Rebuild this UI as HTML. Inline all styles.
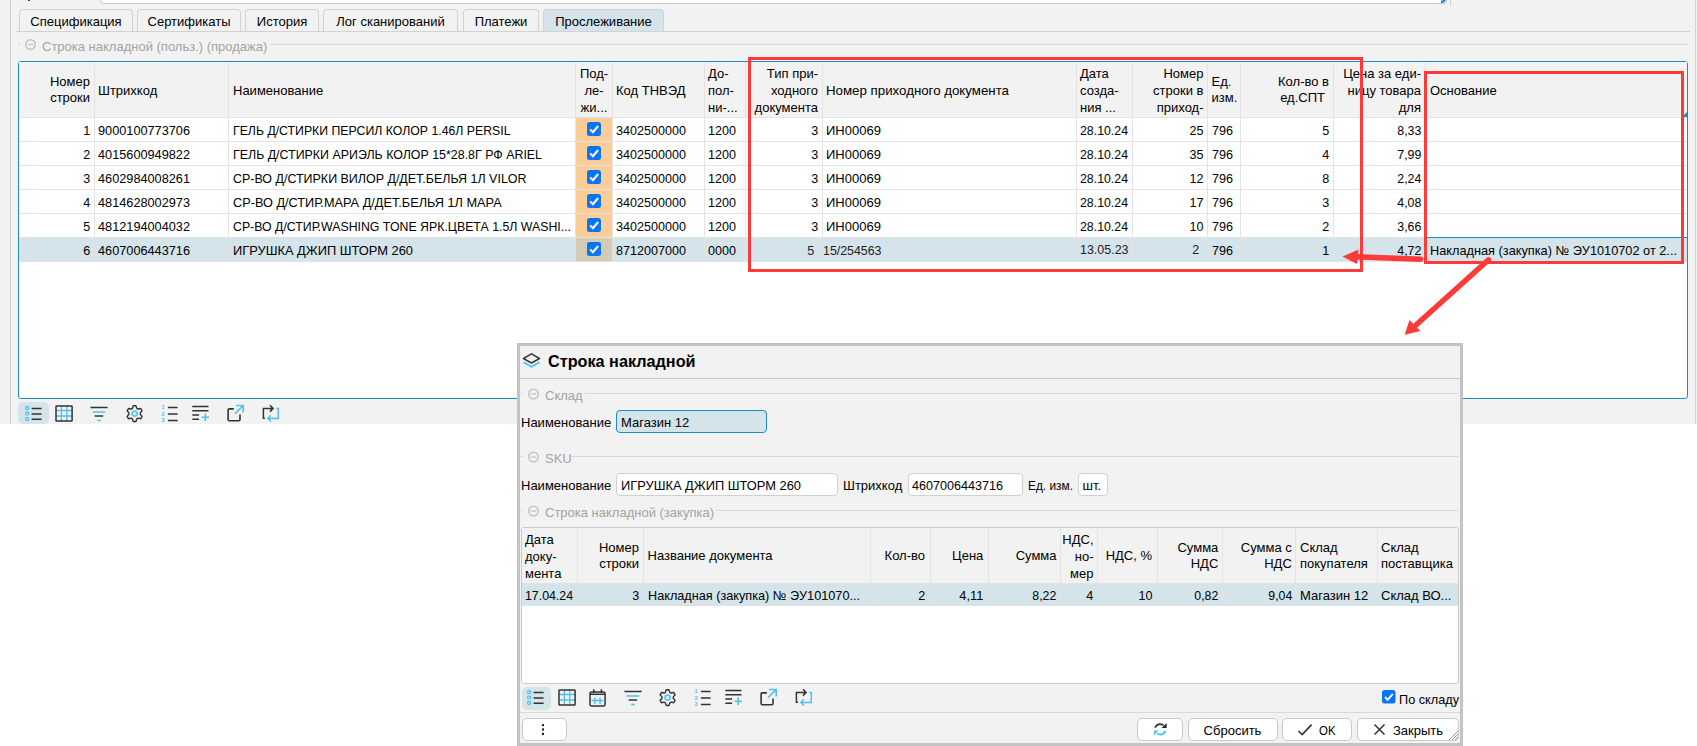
<!DOCTYPE html>
<html><head><meta charset="utf-8"><style>
html,body{margin:0;padding:0;}
body{width:1697px;height:746px;position:relative;overflow:hidden;background:#fff;font-family:"Liberation Sans",sans-serif;}
body>div,body>svg{position:absolute;}
.t{white-space:pre;}
</style></head><body>
<div style="left:0px;top:0px;width:1697px;height:424px;background:#f2f2f2"></div>
<div style="left:10px;top:0px;width:1px;height:424px;background:#cfcfcf"></div>
<div style="left:1695px;top:0px;width:1px;height:424px;background:#d2d2d2"></div>
<div style="left:100px;top:-20px;width:1347px;height:24px;background:#fff;border:1px solid #c8c8c8;border-top:none;border-radius:0 0 4px 4px;box-sizing:border-box"></div>
<svg style="left:1436px;top:-6px" width="12" height="10"><path d="M5 7.9 Q9.4 7.9 9.4 2" stroke="#1385c1" stroke-width="2.2" fill="none"/></svg>
<div style="left:1450px;top:0px;width:1px;height:6px;background:#cfcfcf"></div>
<div style="left:28px;top:0px;width:2px;height:1px;background:#5a3a20"></div>
<div style="left:16px;top:31px;width:1674px;height:1px;background:#d2d2d2"></div>
<div style="left:19px;top:9px;width:114px;height:22px;background:#f2f2f2;border:1px solid #d2d2d2;border-bottom:none;border-radius:4px 4px 0 0;box-sizing:border-box"></div>
<div class="t" style="top:14px;font-size:13px;line-height:16px;color:#000;left:76.0px;transform-origin:0 0;transform:translateX(-50%);">Спецификация</div>
<div style="left:137px;top:9px;width:104px;height:22px;background:#f2f2f2;border:1px solid #d2d2d2;border-bottom:none;border-radius:4px 4px 0 0;box-sizing:border-box"></div>
<div class="t" style="top:14px;font-size:13px;line-height:16px;color:#000;left:189.0px;transform-origin:0 0;transform:translateX(-50%);">Сертификаты</div>
<div style="left:245px;top:9px;width:74px;height:22px;background:#f2f2f2;border:1px solid #d2d2d2;border-bottom:none;border-radius:4px 4px 0 0;box-sizing:border-box"></div>
<div class="t" style="top:14px;font-size:13px;line-height:16px;color:#000;left:282.0px;transform-origin:0 0;transform:translateX(-50%);">История</div>
<div style="left:323px;top:9px;width:135px;height:22px;background:#f2f2f2;border:1px solid #d2d2d2;border-bottom:none;border-radius:4px 4px 0 0;box-sizing:border-box"></div>
<div class="t" style="top:14px;font-size:13px;line-height:16px;color:#000;left:390.5px;transform-origin:0 0;transform:translateX(-50%);">Лог сканирований</div>
<div style="left:463px;top:9px;width:76px;height:22px;background:#f2f2f2;border:1px solid #d2d2d2;border-bottom:none;border-radius:4px 4px 0 0;box-sizing:border-box"></div>
<div class="t" style="top:14px;font-size:13px;line-height:16px;color:#000;left:501.0px;transform-origin:0 0;transform:translateX(-50%);">Платежи</div>
<div style="left:543px;top:9px;width:121px;height:22px;background:#d4e4ea;border:1px solid #d2d2d2;border-bottom:none;border-radius:4px 4px 0 0;box-sizing:border-box"></div>
<div class="t" style="top:14px;font-size:13px;line-height:16px;color:#000;left:603.5px;transform-origin:0 0;transform:translateX(-50%);">Прослеживание</div>
<div style="left:18px;top:44px;width:2px;height:1px;background:#cfcfcf"></div>
<svg style="left:24px;top:38px" width="12" height="12"><circle cx="6.5" cy="6.5" r="4.7" fill="none" stroke="#c4c4c4" stroke-width="1.6"/><line x1="3.8" y1="6.5" x2="9.2" y2="6.5" stroke="#c4c4c4" stroke-width="1.3"/></svg>
<div class="t" style="top:39px;font-size:13px;line-height:16px;color:#a3a3a3;left:42px;transform-origin:0 0;">Строка накладной (польз.) (продажа)</div>
<div style="left:270px;top:44px;width:1418px;height:1px;background:#d8d8d8"></div>
<div style="left:18px;top:61px;width:1670px;height:338px;background:#fff;border:1px solid #1a8bc4;border-radius:3px;box-sizing:border-box"></div>
<div style="left:19px;top:62px;width:1668px;height:55px;background:#f2f2f2"></div>
<div style="left:19px;top:238px;width:1668px;height:23px;background:#d4e4ea"></div>
<div style="left:576px;top:118px;width:36px;height:23px;background:#fdcd99"></div>
<div style="left:576px;top:142px;width:36px;height:23px;background:#fdcd99"></div>
<div style="left:576px;top:166px;width:36px;height:23px;background:#fdcd99"></div>
<div style="left:576px;top:190px;width:36px;height:23px;background:#fdcd99"></div>
<div style="left:576px;top:214px;width:36px;height:23px;background:#fdcd99"></div>
<div style="left:576px;top:238px;width:36px;height:23px;background:#d3cbb3"></div>
<div style="left:19px;top:117px;width:1668px;height:1px;background:#e3e3e3"></div>
<div style="left:19px;top:141px;width:1668px;height:1px;background:#e3e3e3"></div>
<div style="left:19px;top:165px;width:1668px;height:1px;background:#e3e3e3"></div>
<div style="left:19px;top:189px;width:1668px;height:1px;background:#e3e3e3"></div>
<div style="left:19px;top:213px;width:1668px;height:1px;background:#e3e3e3"></div>
<div style="left:19px;top:237px;width:1668px;height:1px;background:#e3e3e3"></div>
<div style="left:19px;top:261px;width:1668px;height:1px;background:#e3e3e3"></div>
<div style="left:94px;top:62px;width:1px;height:200px;background:#e3e3e3"></div>
<div style="left:228px;top:62px;width:1px;height:200px;background:#e3e3e3"></div>
<div style="left:575px;top:62px;width:1px;height:200px;background:#e3e3e3"></div>
<div style="left:612px;top:62px;width:1px;height:200px;background:#e3e3e3"></div>
<div style="left:704px;top:62px;width:1px;height:200px;background:#e3e3e3"></div>
<div style="left:745px;top:62px;width:1px;height:200px;background:#e3e3e3"></div>
<div style="left:822px;top:62px;width:1px;height:200px;background:#e3e3e3"></div>
<div style="left:1076px;top:62px;width:1px;height:200px;background:#e3e3e3"></div>
<div style="left:1132px;top:62px;width:1px;height:200px;background:#e3e3e3"></div>
<div style="left:1207px;top:62px;width:1px;height:200px;background:#e3e3e3"></div>
<div style="left:1240px;top:62px;width:1px;height:200px;background:#e3e3e3"></div>
<div style="left:1333px;top:62px;width:1px;height:200px;background:#e3e3e3"></div>
<div style="left:1425px;top:62px;width:1px;height:200px;background:#e3e3e3"></div>
<div style="left:1425px;top:237px;width:262px;height:1px;background:#1a8bc4"></div>
<svg style="left:1682px;top:112px" width="6" height="6"><path d="M5 0V5H0Z" fill="#1a8bc4"/></svg>
<div class="t" style="top:74px;font-size:13px;line-height:16px;color:#000;right:1607px;transform-origin:100% 0;">Номер</div>
<div class="t" style="top:90px;font-size:13px;line-height:16px;color:#000;right:1607px;transform-origin:100% 0;">строки</div>
<div class="t" style="top:83px;font-size:13px;line-height:16px;color:#000;left:98px;transform-origin:0 0;">Штрихкод</div>
<div class="t" style="top:83px;font-size:13px;line-height:16px;color:#000;left:233px;transform-origin:0 0;">Наименование</div>
<div class="t" style="top:66px;font-size:13px;line-height:16px;color:#000;left:594px;transform-origin:0 0;transform:translateX(-50%);">Под-</div>
<div class="t" style="top:83px;font-size:13px;line-height:16px;color:#000;left:594px;transform-origin:0 0;transform:translateX(-50%);">ле-</div>
<div class="t" style="top:100px;font-size:13px;line-height:16px;color:#000;left:594px;transform-origin:0 0;transform:translateX(-50%);">жи...</div>
<div class="t" style="top:83px;font-size:13px;line-height:16px;color:#000;left:616px;transform-origin:0 0;">Код ТНВЭД</div>
<div class="t" style="top:66px;font-size:13px;line-height:16px;color:#000;left:708px;transform-origin:0 0;">До-</div>
<div class="t" style="top:83px;font-size:13px;line-height:16px;color:#000;left:708px;transform-origin:0 0;">пол-</div>
<div class="t" style="top:100px;font-size:13px;line-height:16px;color:#000;left:708px;transform-origin:0 0;">ни-...</div>
<div class="t" style="top:66px;font-size:13px;line-height:16px;color:#000;right:879px;transform-origin:100% 0;">Тип при-</div>
<div class="t" style="top:83px;font-size:13px;line-height:16px;color:#000;right:879px;transform-origin:100% 0;">ходного</div>
<div class="t" style="top:100px;font-size:13px;line-height:16px;color:#000;right:879px;transform-origin:100% 0;">документа</div>
<div class="t" style="top:83px;font-size:13px;line-height:16px;color:#000;left:826px;transform-origin:0 0;transform:scaleX(1.0215);">Номер приходного документа</div>
<div class="t" style="top:66px;font-size:13px;line-height:16px;color:#000;left:1080px;transform-origin:0 0;">Дата</div>
<div class="t" style="top:83px;font-size:13px;line-height:16px;color:#000;left:1080px;transform-origin:0 0;">созда-</div>
<div class="t" style="top:100px;font-size:13px;line-height:16px;color:#000;left:1080px;transform-origin:0 0;">ния ...</div>
<div class="t" style="top:66px;font-size:13px;line-height:16px;color:#000;right:493.5px;transform-origin:100% 0;">Номер</div>
<div class="t" style="top:83px;font-size:13px;line-height:16px;color:#000;right:493.5px;transform-origin:100% 0;">строки в</div>
<div class="t" style="top:100px;font-size:13px;line-height:16px;color:#000;right:493.5px;transform-origin:100% 0;">приход-</div>
<div class="t" style="top:74px;font-size:13px;line-height:16px;color:#000;left:1211.5px;transform-origin:0 0;">Ед.</div>
<div class="t" style="top:90px;font-size:13px;line-height:16px;color:#000;left:1211.5px;transform-origin:0 0;">изм.</div>
<div class="t" style="top:74px;font-size:13px;line-height:16px;color:#000;right:368px;transform-origin:100% 0;">Кол-во в</div>
<div class="t" style="top:90px;font-size:13px;line-height:16px;color:#000;right:372px;transform-origin:100% 0;">ед.СПТ</div>
<div class="t" style="top:66px;font-size:13px;line-height:16px;color:#000;right:276px;transform-origin:100% 0;">Цена за еди-</div>
<div class="t" style="top:83px;font-size:13px;line-height:16px;color:#000;right:276px;transform-origin:100% 0;">ницу товара</div>
<div class="t" style="top:100px;font-size:13px;line-height:16px;color:#000;right:276px;transform-origin:100% 0;">для</div>
<div class="t" style="top:83px;font-size:13px;line-height:16px;color:#000;left:1430px;transform-origin:0 0;">Основание</div>
<div class="t" style="top:123px;font-size:13px;line-height:16px;color:#000;right:1607px;transform-origin:100% 0;transform:scaleX(0.9676);">1</div>
<div class="t" style="top:123px;font-size:13px;line-height:16px;color:#000;left:98px;transform-origin:0 0;transform:scaleX(0.9787);">9000100773706</div>
<div class="t" style="top:123px;font-size:13px;line-height:16px;color:#000;left:233px;transform-origin:0 0;transform:scaleX(0.9449);">ГЕЛЬ Д/СТИРКИ ПЕРСИЛ КОЛОР 1.46Л PERSIL</div>
<div class="t" style="top:123px;font-size:13px;line-height:16px;color:#000;left:616px;transform-origin:0 0;transform:scaleX(0.9680);">3402500000</div>
<div class="t" style="top:123px;font-size:13px;line-height:16px;color:#000;left:708px;transform-origin:0 0;transform:scaleX(0.9681);">1200</div>
<div class="t" style="top:123px;font-size:13px;line-height:16px;color:#000;right:879px;transform-origin:100% 0;transform:scaleX(0.9676);">3</div>
<div class="t" style="top:123px;font-size:13px;line-height:16px;color:#000;left:826px;transform-origin:0 0;">ИН00069</div>
<div class="t" style="top:123px;font-size:13px;line-height:16px;color:#000;left:1080px;transform-origin:0 0;transform:scaleX(0.9484);">28.10.24</div>
<div class="t" style="top:123px;font-size:13px;line-height:16px;color:#000;right:493.5px;transform-origin:100% 0;transform:scaleX(0.9676);">25</div>
<div class="t" style="top:123px;font-size:13px;line-height:16px;color:#000;left:1211.5px;transform-origin:0 0;transform:scaleX(0.9676);">796</div>
<div class="t" style="top:123px;font-size:13px;line-height:16px;color:#000;right:368px;transform-origin:100% 0;transform:scaleX(0.9676);">5</div>
<div class="t" style="top:123px;font-size:13px;line-height:16px;color:#000;right:276px;transform-origin:100% 0;transform:scaleX(0.9481);">8,33</div>
<svg style="left:587px;top:122px" width="14" height="14"><rect x="0" y="0" width="14" height="14" rx="2.5" fill="#0a74f7"/><path d="M3.2 7.4 L5.9 10.2 L11.2 4" stroke="#fff" stroke-width="2" fill="none"/></svg>
<div class="t" style="top:147px;font-size:13px;line-height:16px;color:#000;right:1607px;transform-origin:100% 0;transform:scaleX(0.9676);">2</div>
<div class="t" style="top:147px;font-size:13px;line-height:16px;color:#000;left:98px;transform-origin:0 0;transform:scaleX(0.9787);">4015600949822</div>
<div class="t" style="top:147px;font-size:13px;line-height:16px;color:#000;left:233px;transform-origin:0 0;transform:scaleX(0.9540);">ГЕЛЬ Д/СТИРКИ АРИЭЛЬ КОЛОР 15*28.8Г РФ ARIEL</div>
<div class="t" style="top:147px;font-size:13px;line-height:16px;color:#000;left:616px;transform-origin:0 0;transform:scaleX(0.9680);">3402500000</div>
<div class="t" style="top:147px;font-size:13px;line-height:16px;color:#000;left:708px;transform-origin:0 0;transform:scaleX(0.9681);">1200</div>
<div class="t" style="top:147px;font-size:13px;line-height:16px;color:#000;right:879px;transform-origin:100% 0;transform:scaleX(0.9676);">3</div>
<div class="t" style="top:147px;font-size:13px;line-height:16px;color:#000;left:826px;transform-origin:0 0;">ИН00069</div>
<div class="t" style="top:147px;font-size:13px;line-height:16px;color:#000;left:1080px;transform-origin:0 0;transform:scaleX(0.9484);">28.10.24</div>
<div class="t" style="top:147px;font-size:13px;line-height:16px;color:#000;right:493.5px;transform-origin:100% 0;transform:scaleX(0.9676);">35</div>
<div class="t" style="top:147px;font-size:13px;line-height:16px;color:#000;left:1211.5px;transform-origin:0 0;transform:scaleX(0.9676);">796</div>
<div class="t" style="top:147px;font-size:13px;line-height:16px;color:#000;right:368px;transform-origin:100% 0;transform:scaleX(0.9676);">4</div>
<div class="t" style="top:147px;font-size:13px;line-height:16px;color:#000;right:276px;transform-origin:100% 0;transform:scaleX(0.9481);">7,99</div>
<svg style="left:587px;top:146px" width="14" height="14"><rect x="0" y="0" width="14" height="14" rx="2.5" fill="#0a74f7"/><path d="M3.2 7.4 L5.9 10.2 L11.2 4" stroke="#fff" stroke-width="2" fill="none"/></svg>
<div class="t" style="top:171px;font-size:13px;line-height:16px;color:#000;right:1607px;transform-origin:100% 0;transform:scaleX(0.9676);">3</div>
<div class="t" style="top:171px;font-size:13px;line-height:16px;color:#000;left:98px;transform-origin:0 0;transform:scaleX(0.9787);">4602984008261</div>
<div class="t" style="top:171px;font-size:13px;line-height:16px;color:#000;left:233px;transform-origin:0 0;transform:scaleX(0.9585);">СР-ВО Д/СТИРКИ ВИЛОР Д/ДЕТ.БЕЛЬЯ 1Л VILOR</div>
<div class="t" style="top:171px;font-size:13px;line-height:16px;color:#000;left:616px;transform-origin:0 0;transform:scaleX(0.9680);">3402500000</div>
<div class="t" style="top:171px;font-size:13px;line-height:16px;color:#000;left:708px;transform-origin:0 0;transform:scaleX(0.9681);">1200</div>
<div class="t" style="top:171px;font-size:13px;line-height:16px;color:#000;right:879px;transform-origin:100% 0;transform:scaleX(0.9676);">3</div>
<div class="t" style="top:171px;font-size:13px;line-height:16px;color:#000;left:826px;transform-origin:0 0;">ИН00069</div>
<div class="t" style="top:171px;font-size:13px;line-height:16px;color:#000;left:1080px;transform-origin:0 0;transform:scaleX(0.9484);">28.10.24</div>
<div class="t" style="top:171px;font-size:13px;line-height:16px;color:#000;right:493.5px;transform-origin:100% 0;transform:scaleX(0.9676);">12</div>
<div class="t" style="top:171px;font-size:13px;line-height:16px;color:#000;left:1211.5px;transform-origin:0 0;transform:scaleX(0.9676);">796</div>
<div class="t" style="top:171px;font-size:13px;line-height:16px;color:#000;right:368px;transform-origin:100% 0;transform:scaleX(0.9676);">8</div>
<div class="t" style="top:171px;font-size:13px;line-height:16px;color:#000;right:276px;transform-origin:100% 0;transform:scaleX(0.9481);">2,24</div>
<svg style="left:587px;top:170px" width="14" height="14"><rect x="0" y="0" width="14" height="14" rx="2.5" fill="#0a74f7"/><path d="M3.2 7.4 L5.9 10.2 L11.2 4" stroke="#fff" stroke-width="2" fill="none"/></svg>
<div class="t" style="top:195px;font-size:13px;line-height:16px;color:#000;right:1607px;transform-origin:100% 0;transform:scaleX(0.9676);">4</div>
<div class="t" style="top:195px;font-size:13px;line-height:16px;color:#000;left:98px;transform-origin:0 0;transform:scaleX(0.9787);">4814628002973</div>
<div class="t" style="top:195px;font-size:13px;line-height:16px;color:#000;left:233px;transform-origin:0 0;transform:scaleX(0.9790);">СР-ВО Д/СТИР.МАРА Д/ДЕТ.БЕЛЬЯ 1Л МАРА</div>
<div class="t" style="top:195px;font-size:13px;line-height:16px;color:#000;left:616px;transform-origin:0 0;transform:scaleX(0.9680);">3402500000</div>
<div class="t" style="top:195px;font-size:13px;line-height:16px;color:#000;left:708px;transform-origin:0 0;transform:scaleX(0.9681);">1200</div>
<div class="t" style="top:195px;font-size:13px;line-height:16px;color:#000;right:879px;transform-origin:100% 0;transform:scaleX(0.9676);">3</div>
<div class="t" style="top:195px;font-size:13px;line-height:16px;color:#000;left:826px;transform-origin:0 0;">ИН00069</div>
<div class="t" style="top:195px;font-size:13px;line-height:16px;color:#000;left:1080px;transform-origin:0 0;transform:scaleX(0.9484);">28.10.24</div>
<div class="t" style="top:195px;font-size:13px;line-height:16px;color:#000;right:493.5px;transform-origin:100% 0;transform:scaleX(0.9676);">17</div>
<div class="t" style="top:195px;font-size:13px;line-height:16px;color:#000;left:1211.5px;transform-origin:0 0;transform:scaleX(0.9676);">796</div>
<div class="t" style="top:195px;font-size:13px;line-height:16px;color:#000;right:368px;transform-origin:100% 0;transform:scaleX(0.9676);">3</div>
<div class="t" style="top:195px;font-size:13px;line-height:16px;color:#000;right:276px;transform-origin:100% 0;transform:scaleX(0.9481);">4,08</div>
<svg style="left:587px;top:194px" width="14" height="14"><rect x="0" y="0" width="14" height="14" rx="2.5" fill="#0a74f7"/><path d="M3.2 7.4 L5.9 10.2 L11.2 4" stroke="#fff" stroke-width="2" fill="none"/></svg>
<div class="t" style="top:219px;font-size:13px;line-height:16px;color:#000;right:1607px;transform-origin:100% 0;transform:scaleX(0.9676);">5</div>
<div class="t" style="top:219px;font-size:13px;line-height:16px;color:#000;left:98px;transform-origin:0 0;transform:scaleX(0.9787);">4812194004032</div>
<div class="t" style="top:219px;font-size:13px;line-height:16px;color:#000;left:233px;transform-origin:0 0;transform:scaleX(0.9481);">СР-ВО Д/СТИР.WASHING TONE ЯРК.ЦВЕТА 1.5Л WASHI...</div>
<div class="t" style="top:219px;font-size:13px;line-height:16px;color:#000;left:616px;transform-origin:0 0;transform:scaleX(0.9680);">3402500000</div>
<div class="t" style="top:219px;font-size:13px;line-height:16px;color:#000;left:708px;transform-origin:0 0;transform:scaleX(0.9681);">1200</div>
<div class="t" style="top:219px;font-size:13px;line-height:16px;color:#000;right:879px;transform-origin:100% 0;transform:scaleX(0.9676);">3</div>
<div class="t" style="top:219px;font-size:13px;line-height:16px;color:#000;left:826px;transform-origin:0 0;">ИН00069</div>
<div class="t" style="top:219px;font-size:13px;line-height:16px;color:#000;left:1080px;transform-origin:0 0;transform:scaleX(0.9484);">28.10.24</div>
<div class="t" style="top:219px;font-size:13px;line-height:16px;color:#000;right:493.5px;transform-origin:100% 0;transform:scaleX(0.9676);">10</div>
<div class="t" style="top:219px;font-size:13px;line-height:16px;color:#000;left:1211.5px;transform-origin:0 0;transform:scaleX(0.9676);">796</div>
<div class="t" style="top:219px;font-size:13px;line-height:16px;color:#000;right:368px;transform-origin:100% 0;transform:scaleX(0.9676);">2</div>
<div class="t" style="top:219px;font-size:13px;line-height:16px;color:#000;right:276px;transform-origin:100% 0;transform:scaleX(0.9481);">3,66</div>
<svg style="left:587px;top:218px" width="14" height="14"><rect x="0" y="0" width="14" height="14" rx="2.5" fill="#0a74f7"/><path d="M3.2 7.4 L5.9 10.2 L11.2 4" stroke="#fff" stroke-width="2" fill="none"/></svg>
<div class="t" style="top:243px;font-size:13px;line-height:16px;color:#000;right:1607px;transform-origin:100% 0;transform:scaleX(0.9676);">6</div>
<div class="t" style="top:243px;font-size:13px;line-height:16px;color:#000;left:98px;transform-origin:0 0;transform:scaleX(0.9787);">4607006443716</div>
<div class="t" style="top:243px;font-size:13px;line-height:16px;color:#000;left:233px;transform-origin:0 0;transform:scaleX(0.9893);">ИГРУШКА ДЖИП ШТОРМ 260</div>
<div class="t" style="top:243px;font-size:13px;line-height:16px;color:#000;left:616px;transform-origin:0 0;transform:scaleX(0.9680);">8712007000</div>
<div class="t" style="top:243px;font-size:13px;line-height:16px;color:#000;left:708px;transform-origin:0 0;transform:scaleX(0.9681);">0000</div>
<div class="t" style="top:243px;font-size:13px;line-height:16px;color:#222;right:882.5px;transform-origin:100% 0;transform:scaleX(0.9676);">5</div>
<div class="t" style="top:243px;font-size:13px;line-height:16px;color:#222;left:822.5px;transform-origin:0 0;transform:scaleX(0.9519);">15/254563</div>
<div class="t" style="top:242px;font-size:13px;line-height:16px;color:#222;left:1080px;transform-origin:0 0;transform:scaleX(0.9583);">13.05.23</div>
<div class="t" style="top:242px;font-size:13px;line-height:16px;color:#222;right:497.5px;transform-origin:100% 0;transform:scaleX(0.9676);">2</div>
<div class="t" style="top:243px;font-size:13px;line-height:16px;color:#000;left:1211.5px;transform-origin:0 0;transform:scaleX(0.9676);">796</div>
<div class="t" style="top:243px;font-size:13px;line-height:16px;color:#000;right:368px;transform-origin:100% 0;transform:scaleX(0.9676);">1</div>
<div class="t" style="top:243px;font-size:13px;line-height:16px;color:#000;right:276px;transform-origin:100% 0;transform:scaleX(0.9481);">4,72</div>
<div class="t" style="top:243px;font-size:13px;line-height:16px;color:#000;left:1430px;transform-origin:0 0;transform:scaleX(0.9805);">Накладная (закупка) № ЭУ1010702 от 2...</div>
<svg style="left:587px;top:242px" width="14" height="14"><rect x="0" y="0" width="14" height="14" rx="2.5" fill="#0a74f7"/><path d="M3.2 7.4 L5.9 10.2 L11.2 4" stroke="#fff" stroke-width="2" fill="none"/></svg>
<div style="left:18px;top:402px;width:31px;height:22px;background:#d4e4ea;border-radius:5px"></div>
<svg style="left:24px;top:404px" width="20" height="20"><g fill="none" stroke="#4cc0f0" stroke-width="1.2"><rect x="1.7" y="2.7" width="2.8" height="2.8" rx="0.8"/><rect x="1.7" y="8.2" width="2.8" height="2.8" rx="0.8"/><rect x="1.7" y="13.5" width="2.8" height="2.8" rx="0.8"/></g><path d="M7.6 4.6H17.6M7.6 9.9H17.6M7.6 15.2H17.6" stroke="#333" stroke-width="1.5"/></svg>
<svg style="left:55px;top:404px" width="20" height="20"><path d="M6.4 2V17M11.8 2V17M1.5 6.5H17M1.5 12H17" stroke="#4cc0f0" stroke-width="1.3"/><rect x="1.0" y="2.0" width="16.1" height="15.1" rx="0.6" fill="none" stroke="#333" stroke-width="1.5"/></svg>
<svg style="left:89px;top:404px" width="20" height="20"><path d="M1.4 3.4H18.6M5.7 12.1H14.1" stroke="#333" stroke-width="1.5"/><path d="M3.6 8H16.3M8.2 16.4H11.9" stroke="#4cc0f0" stroke-width="1.5"/></svg>
<svg style="left:125px;top:404px" width="20" height="20"><g transform="translate(9.6,9.6)"><path d="M-2.22 -5.25 L-1.35 -7.88 L1.35 -7.88 L2.22 -5.25 L3.44 -4.55 L6.15 -5.11 L7.51 -2.77 L5.66 -0.70 L5.66 0.70 L7.51 2.77 L6.15 5.11 L3.44 4.55 L2.22 5.25 L1.35 7.88 L-1.35 7.88 L-2.22 5.25 L-3.44 4.55 L-6.15 5.11 L-7.51 2.77 L-5.66 0.70 L-5.66 -0.70 L-7.51 -2.77 L-6.15 -5.11 L-3.44 -4.55Z" fill="none" stroke="#333" stroke-width="1.4" stroke-linejoin="round"/><circle r="2.5" fill="none" stroke="#62c8f2" stroke-width="1.9"/></g></svg>
<svg style="left:161px;top:404px" width="20" height="20"><g font-size="5.5" font-family="Liberation Sans" font-weight="bold" fill="#4cc0f0"><text x="0.6" y="5.3">1</text><text x="0.6" y="11.8">2</text><text x="0.6" y="18.3">3</text></g><path d="M6.9 3.4H16.6M6.9 9.9H16.6M6.9 16.4H16.6" stroke="#333" stroke-width="1.5"/></svg>
<svg style="left:191px;top:404px" width="20" height="20"><path d="M1.3 2.5H17.5M1.3 6.7H17.5M1.3 11.1H8.1M1.3 15.2H8.1" stroke="#333" stroke-width="1.5"/><path d="M10.6 13.2H18M14.3 9.6V17" stroke="#4cc0f0" stroke-width="1.6"/></svg>
<svg style="left:226px;top:404px" width="20" height="20"><path d="M7.8 4.9H3.3Q2.1 4.9 2.1 6.1V15.6Q2.1 16.8 3.3 16.8H12.8Q14 16.8 14 15.6V10.6" stroke="#333" stroke-width="1.6" fill="none"/><path d="M8.9 9.8L17 1.7M10.2 1.5H17.2V8.4" stroke="#4cc0f0" stroke-width="1.6" fill="none"/></svg>
<svg style="left:261px;top:404px" width="20" height="20"><path d="M3.9 14.3H2.4V4.4H12.1M8.9 1.3L12.1 4.4L8.9 7.6" stroke="#333" stroke-width="1.5" fill="none"/><path d="M15.4 4.4H17.3V14.5H6.9M9.9 11.2L6.9 14.5L9.9 17.6" stroke="#4cc0f0" stroke-width="1.5" fill="none"/></svg>
<div style="left:517px;top:343px;width:946px;height:403px;background:#f2f2f2;border:3px solid #c3c3c3;box-sizing:border-box"></div>
<svg style="left:521px;top:351px" width="20" height="18"><path d="M2.4 7.5L10.5 2.8L18.5 7.5L10.5 12Z" fill="none" stroke="#3a3a3a" stroke-width="1.5" stroke-linejoin="round"/><path d="M2.4 11.3L10.5 15.8L18.5 11.3" fill="none" stroke="#4cc0f0" stroke-width="1.6"/></svg>
<div class="t" style="top:352px;font-size:16px;line-height:20px;color:#000;font-weight:700;left:547.5px;transform-origin:0 0;transform:scaleX(1.0134);">Строка накладной</div>
<div style="left:520px;top:378px;width:940px;height:1px;background:#c6c6c6"></div>
<div style="left:521px;top:393px;width:2px;height:1px;background:#cfcfcf"></div>
<svg style="left:527px;top:388px" width="12" height="12"><circle cx="6.5" cy="6.0" r="4.7" fill="none" stroke="#c4c4c4" stroke-width="1.6"/><line x1="3.8" y1="6.0" x2="9.2" y2="6.0" stroke="#c4c4c4" stroke-width="1.3"/></svg>
<div class="t" style="top:388px;font-size:13px;line-height:16px;color:#a3a3a3;left:545px;transform-origin:0 0;">Склад</div>
<div style="left:585px;top:393px;width:873px;height:1px;background:#d8d8d8"></div>
<div class="t" style="top:415px;font-size:13px;line-height:16px;color:#000;left:521px;transform-origin:0 0;">Наименование</div>
<div style="left:616px;top:410px;width:151px;height:23px;background:#d4e4ea;border:1px solid #1a8bc4;border-radius:4px;box-sizing:border-box"></div>
<div class="t" style="top:415px;font-size:13px;line-height:16px;color:#000;left:621px;transform-origin:0 0;">Магазин 12</div>
<div style="left:521px;top:456px;width:2px;height:1px;background:#cfcfcf"></div>
<svg style="left:527px;top:451px" width="12" height="12"><circle cx="6.5" cy="6.0" r="4.7" fill="none" stroke="#c4c4c4" stroke-width="1.6"/><line x1="3.8" y1="6.0" x2="9.2" y2="6.0" stroke="#c4c4c4" stroke-width="1.3"/></svg>
<div class="t" style="top:451px;font-size:13px;line-height:16px;color:#a3a3a3;left:545px;transform-origin:0 0;">SKU</div>
<div style="left:571px;top:456px;width:887px;height:1px;background:#d8d8d8"></div>
<div class="t" style="top:478px;font-size:13px;line-height:16px;color:#000;left:521px;transform-origin:0 0;">Наименование</div>
<div style="left:616px;top:473px;width:222px;height:23px;background:#fff;border:1px solid #d0d0d0;border-radius:4px;box-sizing:border-box"></div>
<div class="t" style="top:478px;font-size:13px;line-height:16px;color:#000;left:621px;transform-origin:0 0;transform:scaleX(0.9893);">ИГРУШКА ДЖИП ШТОРМ 260</div>
<div class="t" style="top:478px;font-size:13px;line-height:16px;color:#000;left:843px;transform-origin:0 0;">Штрихкод</div>
<div style="left:908px;top:473px;width:115px;height:23px;background:#fff;border:1px solid #d0d0d0;border-radius:4px;box-sizing:border-box"></div>
<div class="t" style="top:478px;font-size:13px;line-height:16px;color:#000;left:912px;transform-origin:0 0;transform:scaleX(0.9681);">4607006443716</div>
<div class="t" style="top:478px;font-size:13px;line-height:16px;color:#000;left:1028px;transform-origin:0 0;transform:scaleX(0.9134);">Ед. изм.</div>
<div style="left:1078px;top:473px;width:30px;height:23px;background:#fff;border:1px solid #d0d0d0;border-radius:4px;box-sizing:border-box"></div>
<div class="t" style="top:478px;font-size:13px;line-height:16px;color:#000;left:1082.5px;transform-origin:0 0;">шт.</div>
<div style="left:521px;top:510px;width:2px;height:1px;background:#cfcfcf"></div>
<svg style="left:527px;top:505px" width="12" height="12"><circle cx="6.5" cy="6.0" r="4.7" fill="none" stroke="#c4c4c4" stroke-width="1.6"/><line x1="3.8" y1="6.0" x2="9.2" y2="6.0" stroke="#c4c4c4" stroke-width="1.3"/></svg>
<div class="t" style="top:505px;font-size:13px;line-height:16px;color:#a3a3a3;left:545px;transform-origin:0 0;">Строка накладной (закупка)</div>
<div style="left:716px;top:510px;width:742px;height:1px;background:#d8d8d8"></div>
<div style="left:521px;top:527px;width:938px;height:157px;background:#fff;border:1px solid #cbcbcb;border-radius:3px;box-sizing:border-box"></div>
<div style="left:522px;top:528px;width:936px;height:55px;background:#f2f2f2"></div>
<div style="left:522px;top:584px;width:936px;height:21px;background:#d4e4ea"></div>
<div style="left:522px;top:583px;width:936px;height:1px;background:#e3e3e3"></div>
<div style="left:522px;top:605px;width:936px;height:1px;background:#e3e3e3"></div>
<div style="left:577px;top:528px;width:1px;height:77px;background:#e3e3e3"></div>
<div style="left:643px;top:528px;width:1px;height:77px;background:#e3e3e3"></div>
<div style="left:870px;top:528px;width:1px;height:77px;background:#e3e3e3"></div>
<div style="left:930px;top:528px;width:1px;height:77px;background:#e3e3e3"></div>
<div style="left:988px;top:528px;width:1px;height:77px;background:#e3e3e3"></div>
<div style="left:1060px;top:528px;width:1px;height:77px;background:#e3e3e3"></div>
<div style="left:1097px;top:528px;width:1px;height:77px;background:#e3e3e3"></div>
<div style="left:1157px;top:528px;width:1px;height:77px;background:#e3e3e3"></div>
<div style="left:1222px;top:528px;width:1px;height:77px;background:#e3e3e3"></div>
<div style="left:1295px;top:528px;width:1px;height:77px;background:#e3e3e3"></div>
<div style="left:1377px;top:528px;width:1px;height:77px;background:#e3e3e3"></div>
<div class="t" style="top:532px;font-size:13px;line-height:16px;color:#000;left:525px;transform-origin:0 0;">Дата</div>
<div class="t" style="top:549px;font-size:13px;line-height:16px;color:#000;left:525px;transform-origin:0 0;">доку-</div>
<div class="t" style="top:566px;font-size:13px;line-height:16px;color:#000;left:525px;transform-origin:0 0;">мента</div>
<div class="t" style="top:540px;font-size:13px;line-height:16px;color:#000;right:1058px;transform-origin:100% 0;">Номер</div>
<div class="t" style="top:556px;font-size:13px;line-height:16px;color:#000;right:1058px;transform-origin:100% 0;">строки</div>
<div class="t" style="top:548px;font-size:13px;line-height:16px;color:#000;left:647.5px;transform-origin:0 0;">Название документа</div>
<div class="t" style="top:548px;font-size:13px;line-height:16px;color:#000;right:772px;transform-origin:100% 0;">Кол-во</div>
<div class="t" style="top:548px;font-size:13px;line-height:16px;color:#000;right:713.7px;transform-origin:100% 0;">Цена</div>
<div class="t" style="top:548px;font-size:13px;line-height:16px;color:#000;right:640.5px;transform-origin:100% 0;">Сумма</div>
<div class="t" style="top:532px;font-size:13px;line-height:16px;color:#000;right:603.5px;transform-origin:100% 0;">НДС,</div>
<div class="t" style="top:549px;font-size:13px;line-height:16px;color:#000;right:603.5px;transform-origin:100% 0;">но-</div>
<div class="t" style="top:566px;font-size:13px;line-height:16px;color:#000;right:603.5px;transform-origin:100% 0;">мер</div>
<div class="t" style="top:548px;font-size:13px;line-height:16px;color:#000;right:545px;transform-origin:100% 0;">НДС, %</div>
<div class="t" style="top:540px;font-size:13px;line-height:16px;color:#000;right:478.70000000000005px;transform-origin:100% 0;">Сумма</div>
<div class="t" style="top:556px;font-size:13px;line-height:16px;color:#000;right:478.70000000000005px;transform-origin:100% 0;">НДС</div>
<div class="t" style="top:540px;font-size:13px;line-height:16px;color:#000;right:405.20000000000005px;transform-origin:100% 0;">Сумма с</div>
<div class="t" style="top:556px;font-size:13px;line-height:16px;color:#000;right:405.20000000000005px;transform-origin:100% 0;">НДС</div>
<div class="t" style="top:540px;font-size:13px;line-height:16px;color:#000;left:1300px;transform-origin:0 0;">Склад</div>
<div class="t" style="top:556px;font-size:13px;line-height:16px;color:#000;left:1300px;transform-origin:0 0;">покупателя</div>
<div class="t" style="top:540px;font-size:13px;line-height:16px;color:#000;left:1381px;transform-origin:0 0;">Склад</div>
<div class="t" style="top:556px;font-size:13px;line-height:16px;color:#000;left:1381px;transform-origin:0 0;">поставщика</div>
<div class="t" style="top:588px;font-size:13px;line-height:16px;color:#000;left:525px;transform-origin:0 0;transform:scaleX(0.9484);">17.04.24</div>
<div class="t" style="top:588px;font-size:13px;line-height:16px;color:#000;right:1058px;transform-origin:100% 0;transform:scaleX(0.9676);">3</div>
<div class="t" style="top:588px;font-size:13px;line-height:16px;color:#000;left:647.5px;transform-origin:0 0;transform:scaleX(0.9755);">Накладная (закупка) № ЭУ101070...</div>
<div class="t" style="top:588px;font-size:13px;line-height:16px;color:#000;right:772px;transform-origin:100% 0;transform:scaleX(0.9676);">2</div>
<div class="t" style="top:588px;font-size:13px;line-height:16px;color:#000;right:713.7px;transform-origin:100% 0;transform:scaleX(0.9859);">4,11</div>
<div class="t" style="top:588px;font-size:13px;line-height:16px;color:#000;right:640.5px;transform-origin:100% 0;transform:scaleX(0.9481);">8,22</div>
<div class="t" style="top:588px;font-size:13px;line-height:16px;color:#000;right:603.5px;transform-origin:100% 0;transform:scaleX(0.9676);">4</div>
<div class="t" style="top:588px;font-size:13px;line-height:16px;color:#000;right:545px;transform-origin:100% 0;transform:scaleX(0.9676);">10</div>
<div class="t" style="top:588px;font-size:13px;line-height:16px;color:#000;right:478.70000000000005px;transform-origin:100% 0;transform:scaleX(0.9481);">0,82</div>
<div class="t" style="top:588px;font-size:13px;line-height:16px;color:#000;right:405.20000000000005px;transform-origin:100% 0;transform:scaleX(0.9481);">9,04</div>
<div class="t" style="top:588px;font-size:13px;line-height:16px;color:#000;left:1300px;transform-origin:0 0;">Магазин 12</div>
<div class="t" style="top:588px;font-size:13px;line-height:16px;color:#000;left:1381px;transform-origin:0 0;">Склад ВО...</div>
<div style="left:522px;top:687px;width:29px;height:23px;background:#d4e4ea;border-radius:5px"></div>
<svg style="left:526px;top:688px" width="20" height="20"><g fill="none" stroke="#4cc0f0" stroke-width="1.2"><rect x="1.7" y="2.7" width="2.8" height="2.8" rx="0.8"/><rect x="1.7" y="8.2" width="2.8" height="2.8" rx="0.8"/><rect x="1.7" y="13.5" width="2.8" height="2.8" rx="0.8"/></g><path d="M7.6 4.6H17.6M7.6 9.9H17.6M7.6 15.2H17.6" stroke="#333" stroke-width="1.5"/></svg>
<svg style="left:558px;top:688px" width="20" height="20"><path d="M6.4 2V17M11.8 2V17M1.5 6.5H17M1.5 12H17" stroke="#4cc0f0" stroke-width="1.3"/><rect x="1.0" y="2.0" width="16.1" height="15.1" rx="0.6" fill="none" stroke="#333" stroke-width="1.5"/></svg>
<svg style="left:588px;top:688px" width="20" height="20"><rect x="2" y="4.1" width="15.1" height="13.9" rx="1.6" fill="none" stroke="#333" stroke-width="1.5"/><path d="M2 6.2H17.1M5.8 1.2V5M13.4 1.2V5" stroke="#333" stroke-width="1.5"/><path d="M3.5 12.5H15.3M6.9 9.4V16.3M12.1 9.4V16.3" stroke="#4cc0f0" stroke-width="1.4"/></svg>
<svg style="left:623px;top:688px" width="20" height="20"><path d="M1.4 3.4H18.6M5.7 12.1H14.1" stroke="#333" stroke-width="1.5"/><path d="M3.6 8H16.3M8.2 16.4H11.9" stroke="#4cc0f0" stroke-width="1.5"/></svg>
<svg style="left:658px;top:688px" width="20" height="20"><g transform="translate(9.6,9.6)"><path d="M-2.22 -5.25 L-1.35 -7.88 L1.35 -7.88 L2.22 -5.25 L3.44 -4.55 L6.15 -5.11 L7.51 -2.77 L5.66 -0.70 L5.66 0.70 L7.51 2.77 L6.15 5.11 L3.44 4.55 L2.22 5.25 L1.35 7.88 L-1.35 7.88 L-2.22 5.25 L-3.44 4.55 L-6.15 5.11 L-7.51 2.77 L-5.66 0.70 L-5.66 -0.70 L-7.51 -2.77 L-6.15 -5.11 L-3.44 -4.55Z" fill="none" stroke="#333" stroke-width="1.4" stroke-linejoin="round"/><circle r="2.5" fill="none" stroke="#62c8f2" stroke-width="1.9"/></g></svg>
<svg style="left:694px;top:688px" width="20" height="20"><g font-size="5.5" font-family="Liberation Sans" font-weight="bold" fill="#4cc0f0"><text x="0.6" y="5.3">1</text><text x="0.6" y="11.8">2</text><text x="0.6" y="18.3">3</text></g><path d="M6.9 3.4H16.6M6.9 9.9H16.6M6.9 16.4H16.6" stroke="#333" stroke-width="1.5"/></svg>
<svg style="left:724px;top:688px" width="20" height="20"><path d="M1.3 2.5H17.5M1.3 6.7H17.5M1.3 11.1H8.1M1.3 15.2H8.1" stroke="#333" stroke-width="1.5"/><path d="M10.6 13.2H18M14.3 9.6V17" stroke="#4cc0f0" stroke-width="1.6"/></svg>
<svg style="left:759px;top:688px" width="20" height="20"><path d="M7.8 4.9H3.3Q2.1 4.9 2.1 6.1V15.6Q2.1 16.8 3.3 16.8H12.8Q14 16.8 14 15.6V10.6" stroke="#333" stroke-width="1.6" fill="none"/><path d="M8.9 9.8L17 1.7M10.2 1.5H17.2V8.4" stroke="#4cc0f0" stroke-width="1.6" fill="none"/></svg>
<svg style="left:794px;top:688px" width="20" height="20"><path d="M3.9 14.3H2.4V4.4H12.1M8.9 1.3L12.1 4.4L8.9 7.6" stroke="#333" stroke-width="1.5" fill="none"/><path d="M15.4 4.4H17.3V14.5H6.9M9.9 11.2L6.9 14.5L9.9 17.6" stroke="#4cc0f0" stroke-width="1.5" fill="none"/></svg>
<svg style="left:1382px;top:690px" width="14" height="14"><rect x="0" y="0" width="13.5" height="13.5" rx="2.5" fill="#0a74f7"/><path d="M3 7 L5.6 9.8 L10.8 3.8" stroke="#fff" stroke-width="1.9" fill="none"/></svg>
<div class="t" style="top:692px;font-size:13px;line-height:16px;color:#000;left:1398.5px;transform-origin:0 0;transform:scaleX(0.9769);">По складу</div>
<div style="left:520px;top:712px;width:940px;height:1px;background:#d8d8d8"></div>
<div style="left:522px;top:718px;width:45px;height:23px;background:#fff;border:1px solid #c9c9c9;border-radius:5px;box-sizing:border-box"></div>
<svg style="left:540px;top:722px" width="6" height="16"><circle cx="3" cy="3.2" r="1.15" fill="#111"/><circle cx="3" cy="7.5" r="1.15" fill="#111"/><circle cx="3" cy="12" r="1.15" fill="#111"/></svg>
<div style="left:1137px;top:718px;width:46px;height:23px;background:#fff;border:1px solid #c9c9c9;border-radius:5px;box-sizing:border-box"></div>
<svg style="left:1150px;top:719px" width="20" height="20"><path d="M5 8.6Q7.6 3.5 13.5 6.1" stroke="#333" stroke-width="1.7" fill="none"/><path d="M16.6 3.9V9H11.7Z" fill="#222"/><path d="M15.6 12Q12.6 17.3 6.8 14.6" stroke="#4cc0f0" stroke-width="1.7" fill="none"/><path d="M3.9 11.6H8.4L3.9 16.6Z" fill="#4cc0f0"/></svg>
<div style="left:1188px;top:718px;width:90px;height:23px;background:#fff;border:1px solid #c9c9c9;border-radius:5px;box-sizing:border-box"></div>
<div class="t" style="top:723px;font-size:13px;line-height:16px;color:#000;left:1232.5px;transform-origin:0 0;transform:translateX(-50%);">Сбросить</div>
<div style="left:1282px;top:718px;width:70px;height:23px;background:#fff;border:1px solid #c9c9c9;border-radius:5px;box-sizing:border-box"></div>
<svg style="left:1296px;top:722px" width="18" height="16"><path d="M2.4 9L6.2 12.6L15.6 2.6" stroke="#333" stroke-width="1.6" fill="none"/></svg>
<div class="t" style="top:723px;font-size:13px;line-height:16px;color:#000;left:1319px;transform-origin:0 0;transform:scaleX(0.8778);">OK</div>
<div style="left:1357px;top:718px;width:102px;height:23px;background:#fff;border:1px solid #c9c9c9;border-radius:5px;box-sizing:border-box"></div>
<svg style="left:1372px;top:722px" width="16" height="16"><path d="M2.5 2.5L12.5 12.5M12.5 2.5L2.5 12.5" stroke="#333" stroke-width="1.5" fill="none"/></svg>
<div class="t" style="top:723px;font-size:13px;line-height:16px;color:#000;left:1393px;transform-origin:0 0;">Закрыть</div>
<svg style="left:1447px;top:729px" width="12" height="12"><path d="M11 2L2 11M11 5L5 11M11 8L8 11" stroke="#9a9a9a" stroke-width="1"/></svg>
<div style="left:748px;top:57px;width:615px;height:215px;border:3px solid #fc3a3a;box-sizing:border-box"></div>
<div style="left:1424px;top:71px;width:260px;height:193px;border:3px solid #fc3a3a;box-sizing:border-box"></div>
<svg style="left:1330px;top:240px" width="180" height="110"><path d="M90.5 19.19999999999999 L26 16.80000000000001" stroke="#fc3a3a" stroke-width="5.5" stroke-linecap="round"/><path d="M12.5 16.600000000000023 L28.5 9.5 L27 24Z" fill="#fc3a3a"/><path d="M158.5 19.80000000000001 L86 85" stroke="#fc3a3a" stroke-width="5.5" stroke-linecap="round"/><path d="M74.70000000000005 94.80000000000001 L79.5 80 L90.5 91Z" fill="#fc3a3a"/></svg>
</body></html>
